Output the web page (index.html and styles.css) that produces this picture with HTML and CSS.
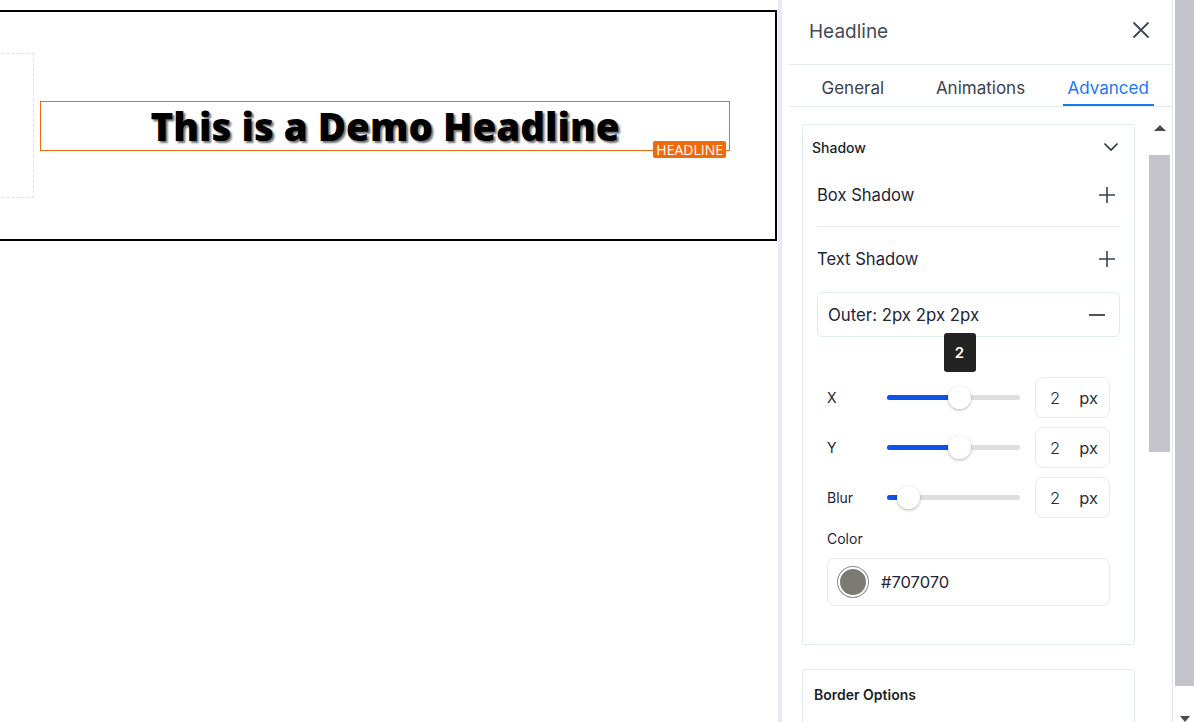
FILE: index.html
```html
<!DOCTYPE html>
<html>
<head>
  <title>Headline Editor</title>
  <link rel="stylesheet" href="styles.css">
</head>
<body>
  <div class="app">
    <div class="canvas">
      <div class="section">
        <div class="column-empty"></div>
        <div class="headline-box">
          <h1 class="demo-headline">This is a Demo Headline</h1>
          <span class="badge">HEADLINE</span>
        </div>
      </div>
    </div>

    <div class="panel-edge"></div>

    <div class="panel">
      <div class="panel-header">
        <span class="panel-title">Headline</span>
        <svg class="close" width="18" height="18" viewBox="0 0 18 18"><path d="M2 2L16 16M16 2L2 16" stroke="#3f4654" stroke-width="1.8" stroke-linecap="round"/></svg>
      </div>

      <div class="tabs">
        <div class="tab"><span>General</span></div>
        <div class="tab"><span>Animations</span></div>
        <div class="tab active"><span>Advanced</span></div>
      </div>

      <div class="panel-body">
        <div class="scroll-content">
          <div class="card">
            <div class="card-head">
              <span>Shadow</span>
              <svg width="16" height="10" viewBox="0 0 16 10"><path d="M1.5 1.5L8 8L14.5 1.5" fill="none" stroke="#2b3040" stroke-width="1.6"/></svg>
            </div>

            <div class="option-row">
              <span>Box Shadow</span>
              <svg width="16" height="16" viewBox="0 0 16 16"><path d="M8 0V16M0 8H16" stroke="#3a4050" stroke-width="1.6"/></svg>
            </div>
            <div class="divider"></div>
            <div class="option-row">
              <span>Text Shadow</span>
              <svg width="16" height="16" viewBox="0 0 16 16"><path d="M8 0V16M0 8H16" stroke="#3a4050" stroke-width="1.6"/></svg>
            </div>

            <div class="outer-box">
              <span>Outer: 2px 2px 2px</span>
              <svg width="16" height="2" viewBox="0 0 16 2"><path d="M0 1H16" stroke="#3a4050" stroke-width="1.8"/></svg>
            </div>

            <div class="controls">
              <div class="slider-row">
                <span class="slider-label">X</span>
                <div class="slider">
                  <div class="slider-fill" style="width: 72px"></div>
                  <div class="slider-thumb" style="left: 72px">
                    <span class="tooltip">2</span>
                  </div>
                </div>
                <div class="num-input"><span>2</span><span>px</span></div>
              </div>
              <div class="slider-row">
                <span class="slider-label">Y</span>
                <div class="slider">
                  <div class="slider-fill" style="width: 72px"></div>
                  <div class="slider-thumb" style="left: 72px"></div>
                </div>
                <div class="num-input"><span>2</span><span>px</span></div>
              </div>
              <div class="slider-row">
                <span class="slider-label">Blur</span>
                <div class="slider">
                  <div class="slider-fill" style="width: 21px"></div>
                  <div class="slider-thumb" style="left: 21px"></div>
                </div>
                <div class="num-input"><span>2</span><span>px</span></div>
              </div>

              <div class="color-label">Color</div>
              <div class="color-input">
                <span class="swatch"></span>
                <span>#707070</span>
              </div>
            </div>
          </div>

          <div class="card card-border">
            <div class="card-head bold">Border Options</div>
          </div>
        </div>

        <div class="inner-scrollbar">
          <div class="arrow-up"></div>
          <div class="inner-thumb"></div>
        </div>
      </div>
    </div>

    <div class="page-scrollbar">
      <div class="page-thumb"></div>
      <div class="arrow-down"></div>
    </div>
  </div>
</body>
</html>
```

FILE: styles.css
```css
body {
  margin: 0;
  background-color: #fff;
  font-family: 'Inter', 'Liberation Sans', sans-serif;
  color: #1e2433;
}

.app {
  display: flex;
  height: 722px;
  overflow: hidden;
}

/* canvas side */
.canvas {
  flex: 0 0 778px;
  padding-top: 10px;
  overflow: hidden;
}

.section {
  display: flex;
  align-items: center;
  margin-left: -30px;
  width: 803px;
  height: 227px;
  border: 2px solid #000;
}

.column-empty {
  width: 61px;
  height: 143px;
  border: 1px dashed #d9e1ea;
  border-left: none;
}

.headline-box {
  position: relative;
  margin-left: 6px;
  width: 688px;
  height: 48px;
  border: 1px solid #f26a10;
  display: flex;
  align-items: center;
  justify-content: center;
}

.demo-headline {
  margin: 0;
  font-family: 'Open Sans', sans-serif;
  font-weight: 800;
  font-size: 38.5px;
  color: #000;
  text-shadow: 2px 2px 2px #707070;
}

.badge {
  position: absolute;
  right: 3px;
  bottom: -8px;
  background-color: #f06a0c;
  color: #fff;
  font-family: 'Open Sans', sans-serif;
  font-size: 14px;
  line-height: 17px;
  padding: 0 3px;
  border-radius: 2px;
}

.panel-edge {
  flex: 0 0 4px;
  background-color: #ece8f6;
}

/* settings panel */
.panel {
  flex: 0 0 390px;
  display: flex;
  flex-direction: column;
  border-right: 1px solid #e2e5ea;
}

.panel-header {
  margin-left: 7px;
  height: 64px;
  padding: 0 22px 0 20px;
  display: flex;
  align-items: center;
  justify-content: space-between;
  border-bottom: 1px solid #e3ebf0;
}

.panel-title {
  font-size: 19px;
  color: #434a57;
  margin-top: -1px;
}

.close {
  margin-top: -5px;
}

.tabs {
  margin-left: 7px;
  display: flex;
  border-bottom: 1px solid #e3ebf0;
}

.tab {
  flex: 1;
  text-align: center;
  font-size: 17px;
  color: #3a404c;
  padding-top: 13px;
}

.tab span {
  display: inline-block;
  padding: 0 5px 6px;
  border-bottom: 2px solid transparent;
}

.tab.active span {
  color: #1a78f2;
  border-bottom-color: #1a78f2;
}

.panel-body {
  flex: 1;
  display: flex;
  min-height: 0;
}

.scroll-content {
  flex: 1;
  padding: 17px 14px 0 20px;
}

.card {
  border: 1px solid #dfecef;
  border-radius: 3px;
  padding: 0 14px 38px 14px;
  margin-bottom: 24px;
}

.card-head {
  display: flex;
  justify-content: space-between;
  align-items: center;
  height: 44px;
  margin: 0 1px 0 -5px;
  font-size: 14px;
  font-weight: 500;
  color: #1b1f2a;
}

.card-head.bold {
  font-weight: 600;
  margin-left: -3px;
  height: 48px;
}

.card-border {
  padding-bottom: 10px;
}

.option-row {
  display: flex;
  justify-content: space-between;
  align-items: center;
  height: 52px;
  padding: 0 5px 0 0;
  font-size: 16.6px;
  color: #1e2538;
}

.divider {
  height: 1px;
  background-color: #e5e7f2;
  margin: 5px 0 6px;
}

.outer-box {
  display: flex;
  justify-content: space-between;
  align-items: center;
  height: 43px;
  margin-top: 7px;
  padding: 0 14px 0 10px;
  border: 1px solid #dcecef;
  border-radius: 6px;
  font-size: 16.8px;
  color: #1e2538;
}

.controls {
  padding: 40px 10px 0 10px;
}

.slider-row {
  display: flex;
  align-items: center;
  height: 41px;
  margin-bottom: 9px;
}

.slider-label {
  width: 60px;
  font-size: 14px;
  color: #1e2538;
}

.slider {
  position: relative;
  width: 133px;
  height: 5px;
  border-radius: 3px;
  background-color: #dedede;
}

.slider-fill {
  height: 5px;
  border-radius: 3px;
  background-color: #0d52ea;
}

.slider-thumb {
  position: absolute;
  top: -9px;
  width: 23px;
  height: 23px;
  margin-left: -11px;
  border-radius: 50%;
  background-color: #fff;
  box-shadow: 0 1px 3px rgba(0, 0, 0, 0.3);
}

.tooltip {
  position: absolute;
  left: 50%;
  bottom: 37px;
  transform: translateX(-50%);
  width: 32px;
  height: 39px;
  line-height: 39px;
  text-align: center;
  background-color: #222;
  border-radius: 3px;
  color: #fff;
  font-size: 15px;
  font-weight: 600;
}

.num-input {
  margin-left: auto;
  width: 75px;
  height: 41px;
  display: flex;
  align-items: center;
  justify-content: space-between;
  padding: 0 11px 0 14px;
  box-sizing: border-box;
  border: 1px solid #e8eaf2;
  border-radius: 8px;
  font-size: 16.5px;
  color: #2a2f3a;
}

.num-input span:first-child {
  font-weight: 300;
}

.color-label {
  font-size: 14px;
  color: #1e2538;
  margin-top: 12px;
  margin-bottom: 11px;
}

.color-input {
  display: flex;
  align-items: center;
  height: 46px;
  padding: 0 10px;
  border: 1px solid #e8eaf2;
  border-radius: 8px;
  font-size: 16.5px;
  color: #1e2538;
}

.swatch {
  width: 26px;
  height: 26px;
  border-radius: 50%;
  background-color: #7b7b74;
  border: 2px solid #fff;
  box-shadow: 0 0 0 1px #8b8b8b;
  margin-right: 13px;
}

.inner-scrollbar {
  width: 21px;
  margin-right: 2px;
  padding-top: 18px;
}

.arrow-up {
  width: 0;
  height: 0;
  margin: 0 auto;
  border-left: 6px solid transparent;
  border-right: 6px solid transparent;
  border-bottom: 6px solid #4a4a4f;
}

.inner-thumb {
  margin-top: 24px;
  height: 297px;
  background-color: #c4c4ca;
}

.page-scrollbar {
  flex: 0 0 19px;
  margin-left: 2px;
  display: flex;
  flex-direction: column;
}

.page-thumb {
  height: 686px;
  background-color: #c4c4cb;
}

.arrow-down {
  width: 0;
  height: 0;
  margin: auto auto 0 5px;
  border-left: 5px solid transparent;
  border-right: 5px solid transparent;
  border-top: 6px solid #4a4a4f;
}
```
